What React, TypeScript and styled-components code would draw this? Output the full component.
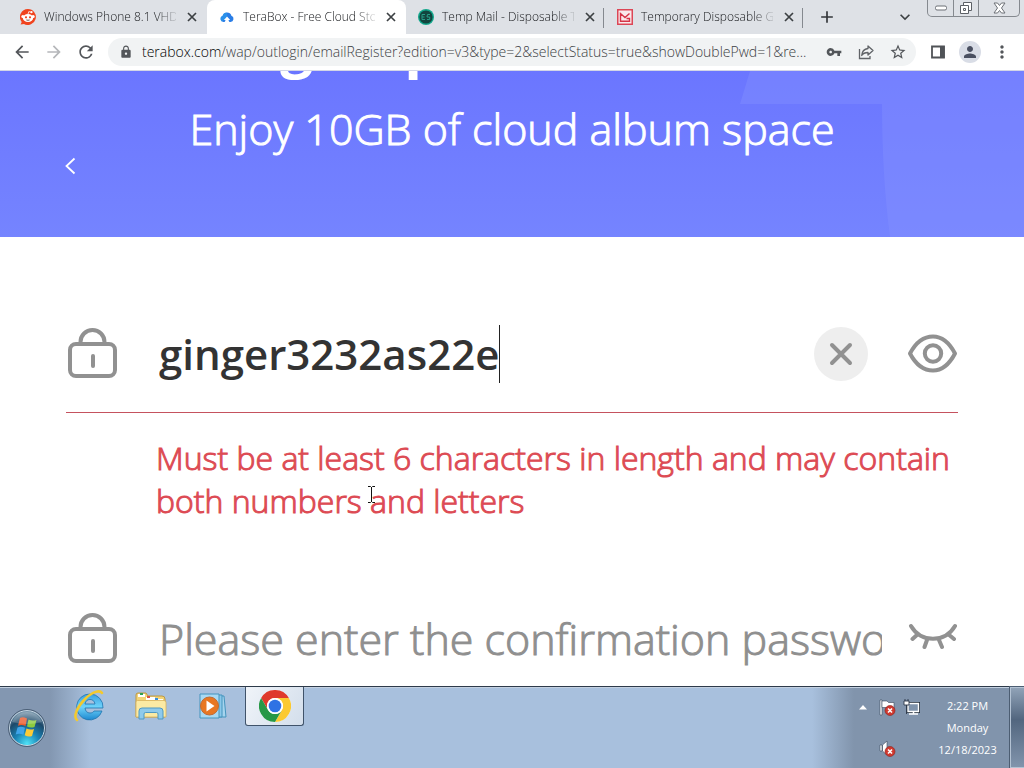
import React from "react";
import styled, { createGlobalStyle } from "styled-components";
import {
  MdAdd,
  MdArrowBack,
  MdArrowForward,
  MdKeyboardArrowDown,
  MdLock,
  MdMoreVert,
  MdPerson,
  MdRefresh,
  MdStarBorder,
  MdVpnKey,
} from "react-icons/md";

const GlobalStyle = createGlobalStyle`
  * { box-sizing: border-box; }
  body { margin: 0; background: #fff; font-family: "Open Sans", "Noto Sans", sans-serif; font-weight: 300; }
  button, input { font: inherit; color: inherit; border: 0; padding: 0; margin: 0; background: none; }
  h1, p { margin: 0; }
  svg { display: block; flex: none; }
`;

const Desktop = styled.div`
  position: relative;
  display: flex;
  flex-direction: column;
  height: 100vh;
  overflow: hidden;
`;

/* Browser frame */

const TabStrip = styled.div`
  display: flex;
  align-items: stretch;
  flex: none;
  height: 34px;
  padding-left: 8px;
  background: #dee1e6;
`;

const Tab = styled.div<{ $active?: boolean; $divided?: boolean }>`
  position: relative;
  display: flex;
  align-items: center;
  gap: 8px;
  flex: 0 1 199px;
  min-width: 0;
  padding: 0 7px 0 12px;
  border-radius: 8px 8px 0 0;
  background: ${(p) => (p.$active ? "#fff" : "transparent")};
  color: #16181b;
  &::after {
    content: "";
    position: absolute;
    right: 1px;
    top: 8px;
    width: 1px;
    height: 20px;
    background: ${(p) => (p.$divided ? "#85898f" : "transparent")};
  }
`;

const TabTitle = styled.span`
  flex: 1;
  min-width: 0;
  overflow: hidden;
  white-space: nowrap;
  font-size: 12px;
  line-height: 20px;
  mask-image: linear-gradient(to right, #000 112px, transparent 136px);
`;

const SmallButton = styled.button`
  display: flex;
  align-items: center;
  justify-content: center;
  width: 16px;
  height: 16px;
  flex: none;
  color: #3c4043;
`;

const NewTab = styled.button`
  display: flex;
  align-items: center;
  justify-content: center;
  width: 46px;
  color: #33363a;
`;

const StripEnd = styled.div`
  display: flex;
  align-items: center;
  gap: 14px;
  margin-left: auto;
  padding-right: 4px;
`;

const WindowControls = styled.div`
  display: flex;
  align-self: flex-start;
  height: 17px;
  border: 1px solid #85898f;
  border-top: 0;
  border-radius: 0 0 5px 5px;
`;

const WindowButton = styled.button<{ $wide?: boolean }>`
  display: flex;
  align-items: center;
  justify-content: center;
  width: ${(p) => (p.$wide ? 41 : 25)}px;
  & + & {
    border-left: 1px solid #85898f;
  }
`;

const Toolbar = styled.div`
  display: flex;
  align-items: center;
  flex: none;
  height: 37px;
  padding: 0 6px;
  background: #fff;
  border-bottom: 1px solid #d3d6e6;
`;

const ToolButton = styled.button<{ $dim?: boolean }>`
  display: flex;
  align-items: center;
  justify-content: center;
  flex: none;
  width: 32px;
  height: 28px;
  color: ${(p) => (p.$dim ? "#b5b7ba" : "#53565a")};
`;

const Omnibox = styled.div`
  display: flex;
  align-items: center;
  flex: 1;
  min-width: 0;
  height: 28px;
  margin: 0 6px;
  padding: 0 2px 0 11px;
  border-radius: 14px;
  background: #f1f3f4;
  color: #53565a;
`;

const Address = styled.a`
  flex: 1;
  min-width: 0;
  margin: 0 8px 0 9px;
  overflow: hidden;
  white-space: nowrap;
  font-size: 14px;
  line-height: 20px;
  color: #3c4043;
  text-decoration: none;
`;

const Host = styled.span`
  color: #000;
`;

const Avatar = styled.span`
  display: flex;
  align-items: center;
  justify-content: center;
  width: 22px;
  height: 22px;
  border-radius: 50%;
  background: #d9dde6;
  color: #4a5061;
`;

/* Web page */

const Page = styled.main`
  flex: 1;
  min-height: 0;
  overflow: hidden;
  background: #fff;
`;

const Hero = styled.header`
  position: relative;
  display: flex;
  flex-direction: column;
  justify-content: flex-end;
  height: 166px;
  overflow: hidden;
  background: linear-gradient(#6b76ff, #7584ff);
  color: #fff;
`;

const HeroShape = styled.svg`
  position: absolute;
  top: 0;
  right: 0;
`;

const Headline = styled.h1`
  position: relative;
  flex: none;
  text-align: center;
  font-size: 58px;
  line-height: 70px;
  font-weight: 700;
`;

const Tagline = styled.p`
  position: relative;
  flex: none;
  padding-top: 20px;
  text-align: center;
  font-size: 43px;
  line-height: 60px;
  -webkit-text-stroke: 1px currentColor;
`;

const BackRow = styled.div`
  display: flex;
  flex: none;
  height: 78px;
  padding-left: 63px;
`;

const BackButton = styled.button`
  display: flex;
  align-items: center;
  justify-content: center;
  width: 14px;
  height: 14px;
`;

const Form = styled.form`
  padding: 59px 66px 0;
`;

const Field = styled.div<{ $invalid?: boolean }>`
  display: flex;
  align-items: center;
  height: 117px;
  border-bottom: 1px solid ${(p) => (p.$invalid ? "#c5525e" : "#e4e4e4")};
  color: #919191;
`;

const FieldLabel = styled.label`
  flex: none;
  width: 93px;
`;

const Entry = styled.div`
  display: flex;
  align-items: center;
  flex: 1;
  min-width: 0;
`;

const PasswordInput = styled.input<{ $filled?: boolean }>`
  ${(p) => (p.$filled ? "field-sizing: content; max-width: 100%;" : "width: 100%;")}
  min-width: 0;
  height: 60px;
  outline: 0;
  caret-color: transparent;
  color: #333;
  font-size: ${(p) => (p.$filled ? 42 : 43)}px;
  line-height: 60px;
  font-weight: ${(p) => (p.$filled ? 600 : 300)};
  &::placeholder {
    color: #8f8f8f;
    opacity: 1;
    -webkit-text-stroke: 1px #8f8f8f;
  }
`;

const Caret = styled.span`
  flex: none;
  width: 1px;
  height: 58px;
  background: #222;
`;

const ClearButton = styled.button`
  display: flex;
  align-items: center;
  justify-content: center;
  flex: none;
  width: 54px;
  height: 54px;
  border-radius: 50%;
  background: #eee;
`;

const RevealButton = styled.button<{ $gap: number }>`
  flex: none;
  width: 51px;
  margin-left: ${(p) => p.$gap}px;
`;

const ErrorText = styled.p`
  padding: 23px 0 59px 90px;
  font-size: 32px;
  line-height: 43px;
  color: #dd4b54;
  -webkit-text-stroke: 1px currentColor;
`;

/* Taskbar */

const Taskbar = styled.footer`
  display: flex;
  flex: none;
  height: 82px;
  border-top: 1px solid #2d3a4a;
  box-shadow: inset 0 1px 0 #c3d0e0;
  background: linear-gradient(
    to right,
    #8397b1 0,
    #8397b1 50px,
    #a8c0dd 90px,
    #a8c0dd calc(100% - 212px),
    #8194ac calc(100% - 170px),
    #8194ac 100%
  );
`;

const StartButton = styled.button`
  flex: none;
  width: 59px;
  padding-left: 8px;
`;

const TaskList = styled.div`
  display: flex;
  gap: 3px;
`;

const TaskButton = styled.button<{ $open?: boolean }>`
  display: flex;
  align-items: center;
  justify-content: center;
  width: 59px;
  height: 39px;
  border: 1px solid ${(p) => (p.$open ? "#40536a" : "transparent")};
  border-top: 0;
  border-radius: 0 0 3px 3px;
  background: ${(p) => (p.$open ? "linear-gradient(120deg, #f0f4f9, #d3deeb)" : "none")};
`;

const Tray = styled.div`
  display: grid;
  grid-template-columns: repeat(3, 24px);
  grid-template-rows: 41px 41px;
  align-items: center;
  justify-items: center;
  margin-left: auto;
`;

const TrayButton = styled.button<{ $column: number }>`
  grid-column: ${(p) => p.$column};
`;

const Clock = styled.time`
  width: 87px;
  padding: 8px 0 0 2px;
  text-align: center;
  font-size: 11px;
  font-weight: 400;
  line-height: 22px;
  color: #fff;
`;

const ClockLine = styled.span`
  display: block;
`;

const ShowDesktop = styled.button`
  width: 14px;
  border: 1px solid #b3c2d3;
  border-right: 0;
  outline: 1px solid #4c5d72;
  outline-offset: 0;
  background: linear-gradient(#90a2b7, #52667f 40%, #8194ac);
`;

const Pointer = styled.svg`
  position: absolute;
  left: 367px;
  top: 486px;
`;

const TabCloseIcon = () => (
  <svg width="10" height="10" viewBox="0 0 10 10" stroke="#3c4043" strokeWidth="1.700">
    <path d="M1 1l8 8M9 1L1 9" />
  </svg>
);

const RedditIcon = () => (
  <svg width="16" height="16" viewBox="0 0 16 16">
    <path d="M8 0a8 8 0 1 1-4 15L.6 15.6 1.700 13A8 8 0 0 1 8 0z" fill="#f0441f" />
    <circle cx="2.800" cy="7.500" r="1.500" fill="#fff" />
    <circle cx="13.200" cy="7.500" r="1.500" fill="#fff" />
    <circle cx="11.500" cy="3.200" r="1.100" fill="#fff" />
    <path d="M8 5l.8-2.400 2.400.6" stroke="#fff" strokeWidth=".8" fill="none" />
    <ellipse cx="8" cy="9" rx="5.200" ry="4" fill="#fff" />
    <circle cx="6" cy="8.300" r="1.100" fill="#f0441f" />
    <circle cx="10" cy="8.300" r="1.100" fill="#f0441f" />
    <path d="M5.800 10.700q2.200 1.800 4.400 0z" fill="#40211a" />
  </svg>
);

const CloudIcon = () => (
  <svg width="16" height="16" viewBox="0 0 16 16">
    <path d="M5.500 13H4.500a3.200 3.200 0 0 1-.9-6.200A4.600 4.600 0 0 1 12.400 6.800 3.200 3.200 0 0 1 11.500 13h-1L8 10z" fill="#2a7de6" />
    <path d="M8 7.500l3.200 3.500H9.500v2.500h-3V11H4.800z" fill="#fff" />
    <path d="M3.600 6.800A4.600 4.600 0 0 1 8 3.600v3.900L4.800 11 3 12.600A3.200 3.200 0 0 1 3.600 6.800z" fill="#29a5ee" opacity=".5" />
  </svg>
);

const TempMailIcon = () => (
  <svg width="16" height="16" viewBox="0 0 16 16">
    <circle cx="8" cy="8" r="8" fill="#12a78c" />
    <circle cx="8" cy="8" r="6.600" fill="#12463f" />
    <path d="M7 5.500H4v5h3M4 8h2.500M12 5.500H9.500L9 8h2.700v2.500H9" stroke="#279c87" fill="none" />
  </svg>
);

const GmailIcon = () => (
  <svg width="16" height="16" viewBox="0 0 16 16">
    <rect x=".75" y=".75" width="14.500" height="14.500" fill="#fae9eb" stroke="#dc4656" strokeWidth="1.500" />
    <path d="M12.500 4.500L8 8.500l-4.500-4v7.700h9V9.500h-3" fill="none" stroke="#d63447" strokeWidth="1.400" />
  </svg>
);

const ShareIcon = () => (
  <svg width="18" height="18" viewBox="0 0 18 18" fill="none" stroke="#606367" strokeWidth="1.300">
    <path d="M2.500 6v9.500H13V13" />
    <path d="M11 3l5 4.500-5 4.500V9.500c-3 0-5 .8-6.300 3C5 8.500 7.200 6 11 5.500z" strokeLinejoin="round" />
  </svg>
);

const SidePanelIcon = () => (
  <svg width="14" height="14" viewBox="0 0 14 14">
    <path d="M1 1.500h12v11H1z" fill="none" stroke="#505357" strokeWidth="1.800" />
    <path d="M9 1h4.500v12H9z" fill="#505357" />
  </svg>
);

const LockIcon = () => (
  <svg width="51" height="52" viewBox="0 0 51 52" fill="none" stroke="#919191">
    <rect x="4" y="16" width="45" height="32" rx="6" strokeWidth="4" />
    <path d="M14.500 16v-2a12 12 0 0 1 24 0v2" strokeWidth="4" />
    <path d="M27 28v10" strokeWidth="4" strokeLinecap="round" />
  </svg>
);

const EyeIcon = () => (
  <svg width="51" height="40" viewBox="0 0 51 40" fill="none" stroke="#919191" strokeWidth="4">
    <path d="M3 19.500C8 10 16 2.500 26 2.500S43 10 48 19.500C43 29 36 36.500 26 36.500S8 29 3 19.500z" strokeLinejoin="round" />
    <circle cx="26" cy="19.500" r="8.200" />
  </svg>
);

const EyeClosedIcon = () => (
  <svg width="50" height="40" viewBox="0 0 50 40" fill="none" stroke="#919191" strokeWidth="4" strokeLinecap="round">
    <path d="M4 7c10 17 34 17 44 0M11 15l-5.500 5M20 21l-2.500 7M32 21l3 7M41 15l6 5" />
  </svg>
);

const StartOrb = () => (
  <svg width="38" height="38" viewBox="0 0 38 38">
    <defs>
      <radialGradient id="orb" cx=".5" cy=".95" r=".9">
        <stop offset="0" stopColor="#4fe3f7" />
        <stop offset=".4" stopColor="#1a83b5" />
        <stop offset=".75" stopColor="#1c4869" />
        <stop offset="1" stopColor="#7996ab" />
      </radialGradient>
    </defs>
    <circle cx="19" cy="19" r="17.500" fill="url(#orb)" stroke="#c7d8e4" />
    <circle cx="19" cy="19" r="18.500" fill="none" stroke="#32465b" strokeWidth=".7" />
    <path d="M12 9q3-1.600 7 .6L17.500 17q-4-2-7.500-.3z" fill="#ec5b2b" />
    <path d="M20.500 10.500q4 2 8 .4L26.500 18q-3.500 1.400-7.500-.4z" fill="#8ccb3f" />
    <path d="M9.500 18.500q3.500-1.600 7.500.3l-1.600 7q-4-2-7.700-.4z" fill="#3fa4ea" />
    <path d="M18.500 19.500q4 1.800 7.500.4l-2 7q-3.500 1.400-7.300-.6z" fill="#fccb36" />
    <path d="M4 13Q9 3 19 3t15 10Q19 17 4 13z" fill="#fff" opacity=".2" />
  </svg>
);

const ExplorerEIcon = () => (
  <svg width="32" height="32" viewBox="0 0 32 32">
    <defs>
      <linearGradient id="ie" x1="0" y1="0" x2="0" y2="1">
        <stop offset="0" stopColor="#3aa0e0" />
        <stop offset=".5" stopColor="#6fd3fa" />
        <stop offset="1" stopColor="#1c88d0" />
      </linearGradient>
    </defs>
    <path
      d="M17 4a13 13 0 0 1 13 14H12c.3 3 2 5 5 5 2 0 3.300-.8 4-2h8a13 13 0 1 1-12-17zm-5 10h10c-.5-3-2.300-4.500-5-4.500S12.500 11 12 14z"
      fill="url(#ie)"
      stroke="#2273ad"
      strokeWidth=".8"
    />
    <path d="M4 30C0 27 4 17 12 9S27 0 29 3" fill="none" stroke="#f3c92e" strokeWidth="2.600" strokeLinecap="round" />
  </svg>
);

const FolderIcon = () => (
  <svg width="34" height="32" viewBox="0 0 34 32">
    <path d="M2 27V5q0-2 2-2h8l2 3h14q3 0 3 3v18z" fill="#f2d477" stroke="#bb9846" />
    <path d="M4 4h7v3H4zM12 7h9v3h-9zM21 9h8v3h-8z" fill="#fff" />
    <path d="M6 3h3v2H6z" fill="#2c9f52" />
    <path d="M13 6h3v2h-3z" fill="#d95442" />
    <path d="M21 8h3v2h-3z" fill="#378fdb" />
    <path d="M2 27V12q0-1.500 1.500-1.500H30q2 0 2 2V27z" fill="#fbeaa4" stroke="#d8b35d" strokeWidth=".8" />
    <path d="M5 29V21q0-3 3-3h18q3 0 3 3v8h-5v-5q0-1.500-1.500-1.500h-11Q10 22.500 10 24v5z" fill="#8fcaeb" stroke="#4e99c4" />
  </svg>
);

const MediaIcon = () => (
  <svg width="30" height="28" viewBox="0 0 30 28">
    <path d="M12 4h14l2 21H12z" fill="#a5d4ee" stroke="#4594bd" />
    <path d="M8 3h16v22H8z" fill="#8bc8ea" stroke="#4594bd" />
    <path d="M2 2h19v24H2z" fill="#a9d9f2" stroke="#4594bd" />
    <circle cx="11.500" cy="14" r="9" fill="#e87722" stroke="#c06a31" />
    <path d="M8.500 8.500v11l8-5.500z" fill="#fff" />
  </svg>
);

const ChromeIcon = () => (
  <svg width="32" height="32" viewBox="0 0 32 32">
    <circle cx="16" cy="16" r="16" fill="#fff" />
    <path d="M2.140 8A16 16 0 0 1 29.860 8H16a8 8 0 0 0-6.930 12z" fill="#df3a2c" />
    <path d="M29.860 8A16 16 0 0 1 16 32l6.930-12A8 8 0 0 0 16 8z" fill="#fbc931" />
    <path d="M16 32A16 16 0 0 1 2.140 8l6.930 12a8 8 0 0 0 13.860 0z" fill="#279847" />
    <circle cx="16" cy="16" r="8" fill="#fff" />
    <circle cx="16" cy="16" r="6.300" fill="#2f72e4" />
  </svg>
);

const ErrorBadge = () => (
  <>
    <circle cx="11" cy="11.500" r="5" fill="#d0392f" stroke="#8d221c" strokeWidth=".6" />
    <path d="M9 9.500l4 4m0-4l-4 4" stroke="#fff" strokeWidth="1.600" />
  </>
);

const FlagIcon = () => (
  <svg width="17" height="17" viewBox="0 0 17 17">
    <path d="M1 1h2v15H1z" fill="#fff" stroke="#3a475a" strokeWidth=".6" />
    <path d="M3 2h5l1.500 1.500H15V10H9L8 8.500H3z" fill="#fff" stroke="#3a475a" strokeWidth=".6" />
    <ErrorBadge />
  </svg>
);

const SpeakerIcon = () => (
  <svg width="17" height="17" viewBox="0 0 17 17">
    <path d="M1 5h2v6H1zM3.500 5L8 1v14l-4.500-4z" fill="#fff" stroke="#3a475a" strokeWidth=".6" />
    <ErrorBadge />
  </svg>
);

const NetworkIcon = () => (
  <svg width="17" height="17" viewBox="0 0 17 17">
    <path d="M5 4.500h10.500v8H5z" fill="#51657e" stroke="#1d2733" strokeWidth="3" />
    <path d="M5 4.500h10.500v8H5z" fill="#7f93ab" stroke="#fff" strokeWidth="1.400" />
    <path d="M6 15h9M10.500 13v2" stroke="#fff" strokeWidth="1.500" />
    <path d="M1 2h5v4H1zM2 0v2M5 0v2M3.500 6v9" fill="#fff" stroke="#2c394a" strokeWidth=".9" />
  </svg>
);

const tabs = [
  { title: "Windows Phone 8.1 VHD", icon: <RedditIcon /> },
  { title: "TeraBox - Free Cloud Stor", icon: <CloudIcon />, active: true },
  { title: "Temp Mail - Disposable Te", icon: <TempMailIcon />, divided: true },
  { title: "Temporary Disposable Gm", icon: <GmailIcon />, divided: true },
];

const taskItems = [
  { name: "Internet Explorer", icon: <ExplorerEIcon /> },
  { name: "Windows Explorer", icon: <FolderIcon /> },
  { name: "Windows Media Player", icon: <MediaIcon /> },
  { name: "Google Chrome", icon: <ChromeIcon />, open: true },
];

export default function App() {
  return (
    <Desktop>
      <GlobalStyle />
      <TabStrip>
        {tabs.map((tab) => (
          <Tab key={tab.title} $active={tab.active} $divided={tab.divided}>
            {tab.icon}
            <TabTitle>{tab.title}</TabTitle>
            <SmallButton type="button" aria-label="Close tab">
              <TabCloseIcon />
            </SmallButton>
          </Tab>
        ))}
        <NewTab type="button" aria-label="New tab">
          <MdAdd size={20} />
        </NewTab>
        <StripEnd>
          <SmallButton type="button" aria-label="Search tabs">
            <MdKeyboardArrowDown size={20} />
          </SmallButton>
          <WindowControls>
            <WindowButton type="button" aria-label="Minimize">
              <svg width="12" height="6" viewBox="0 0 12 6">
                <rect x=".5" y="1" width="11" height="4" rx="1.500" fill="#fff" stroke="#6c7076" />
              </svg>
            </WindowButton>
            <WindowButton type="button" aria-label="Restore">
              <svg width="14" height="13" viewBox="0 0 14 13" fill="#fff" stroke="#5c6066">
                <path d="M4.500.5h8v8h-8z" />
                <path d="M1.500 3.500h8v8h-8z" />
                <path d="M4.500 6.500h2v2h-2z" />
              </svg>
            </WindowButton>
            <WindowButton type="button" aria-label="Close" $wide>
              <svg width="13" height="12" viewBox="0 0 13 12">
                <path
                  d="M1 1h3.500l2 2.500L8.500 1H12L8.500 6l3.500 5H8.500l-2-2.500-2 2.500H1l3.500-5z"
                  fill="#fff"
                  stroke="#6c7076"
                />
              </svg>
            </WindowButton>
          </WindowControls>
        </StripEnd>
      </TabStrip>

      <Toolbar>
        <ToolButton type="button" aria-label="Back">
          <MdArrowBack size={20} />
        </ToolButton>
        <ToolButton type="button" aria-label="Forward" $dim>
          <MdArrowForward size={20} />
        </ToolButton>
        <ToolButton type="button" aria-label="Reload">
          <MdRefresh size={20} />
        </ToolButton>
        <Omnibox>
          <MdLock size={14} />
          <Address href="#register">
            <Host>terabox.com</Host>
            /wap/outlogin/emailRegister?edition=v3&amp;type=2&amp;selectStatus=true&amp;showDoublePwd=1&amp;re...
          </Address>
          <ToolButton type="button" aria-label="Saved passwords">
            <MdVpnKey size={16} />
          </ToolButton>
          <ToolButton type="button" aria-label="Share">
            <ShareIcon />
          </ToolButton>
          <ToolButton type="button" aria-label="Bookmark this page">
            <MdStarBorder size={18} />
          </ToolButton>
        </Omnibox>
        <ToolButton type="button" aria-label="Side panel">
          <SidePanelIcon />
        </ToolButton>
        <ToolButton type="button" aria-label="Profile">
          <Avatar>
            <MdPerson size={18} />
          </Avatar>
        </ToolButton>
        <ToolButton type="button" aria-label="Menu">
          <MdMoreVert size={20} />
        </ToolButton>
      </Toolbar>

      <Page>
        <Hero>
          <HeroShape width="284" height="166" viewBox="0 0 284 166">
            <path d="M10 0h274v166H150q-8-60-8-133H0z" fill="#8592ff" opacity=".4" />
          </HeroShape>
          <Headline>Sign up for TeraBox</Headline>
          <Tagline>Enjoy 10GB of cloud album space</Tagline>
          <BackRow>
            <BackButton type="button" aria-label="Go back">
              <svg width="12" height="18" viewBox="0 0 12 18" fill="none" stroke="#fff" strokeWidth="1.800">
                <path d="M10.500 1.500L2.500 9l8 7.500" />
              </svg>
            </BackButton>
          </BackRow>
        </Hero>

        <Form id="register">
          <Field $invalid>
            <FieldLabel htmlFor="password" aria-label="Password">
              <LockIcon />
            </FieldLabel>
            <Entry>
              <PasswordInput id="password" type="text" defaultValue="ginger3232as22e" $filled />
              <Caret />
            </Entry>
            <ClearButton type="button" aria-label="Clear">
              <svg width="24" height="24" viewBox="0 0 24 24" stroke="#919191" strokeWidth="4" strokeLinecap="round">
                <path d="M3 3l18 18M21 3L3 21" />
              </svg>
            </ClearButton>
            <RevealButton type="button" aria-label="Hide password" $gap={39}>
              <EyeIcon />
            </RevealButton>
          </Field>
          <ErrorText>
            Must be at least 6 characters in length and may contain both numbers and letters
          </ErrorText>
          <Field>
            <FieldLabel htmlFor="confirm" aria-label="Confirm password">
              <LockIcon />
            </FieldLabel>
            <Entry>
              <PasswordInput id="confirm" type="password" placeholder="Please enter the confirmation password" />
            </Entry>
            <RevealButton type="button" aria-label="Show password" $gap={25}>
              <EyeClosedIcon />
            </RevealButton>
          </Field>
        </Form>
      </Page>

      <Taskbar>
        <StartButton type="button" aria-label="Start">
          <StartOrb />
        </StartButton>
        <TaskList>
          {taskItems.map((item) => (
            <TaskButton key={item.name} type="button" aria-label={item.name} $open={item.open}>
              {item.icon}
            </TaskButton>
          ))}
        </TaskList>
        <Tray>
          <TrayButton type="button" aria-label="Show hidden icons" $column={1}>
            <svg width="8" height="5" viewBox="0 0 8 5">
              <path d="M0 4.500L4 0l4 4.500z" fill="#fff" />
            </svg>
          </TrayButton>
          <TrayButton type="button" aria-label="Action center" $column={2}>
            <FlagIcon />
          </TrayButton>
          <TrayButton type="button" aria-label="Network" $column={3}>
            <NetworkIcon />
          </TrayButton>
          <TrayButton type="button" aria-label="Volume muted" $column={2}>
            <SpeakerIcon />
          </TrayButton>
        </Tray>
        <Clock>
          <ClockLine>2:22 PM</ClockLine>
          <ClockLine>Monday</ClockLine>
          <ClockLine>12/18/2023</ClockLine>
        </Clock>
        <ShowDesktop type="button" aria-label="Show desktop" />
      </Taskbar>

      <Pointer width="9" height="17" viewBox="0 0 9 17" fill="none" stroke="#111">
        <path d="M1 .5h2.500l1 1 1-1H8M4.500 1v15M1 16.500h2.500l1-1 1 1H8" />
      </Pointer>
    </Desktop>
  );
}
